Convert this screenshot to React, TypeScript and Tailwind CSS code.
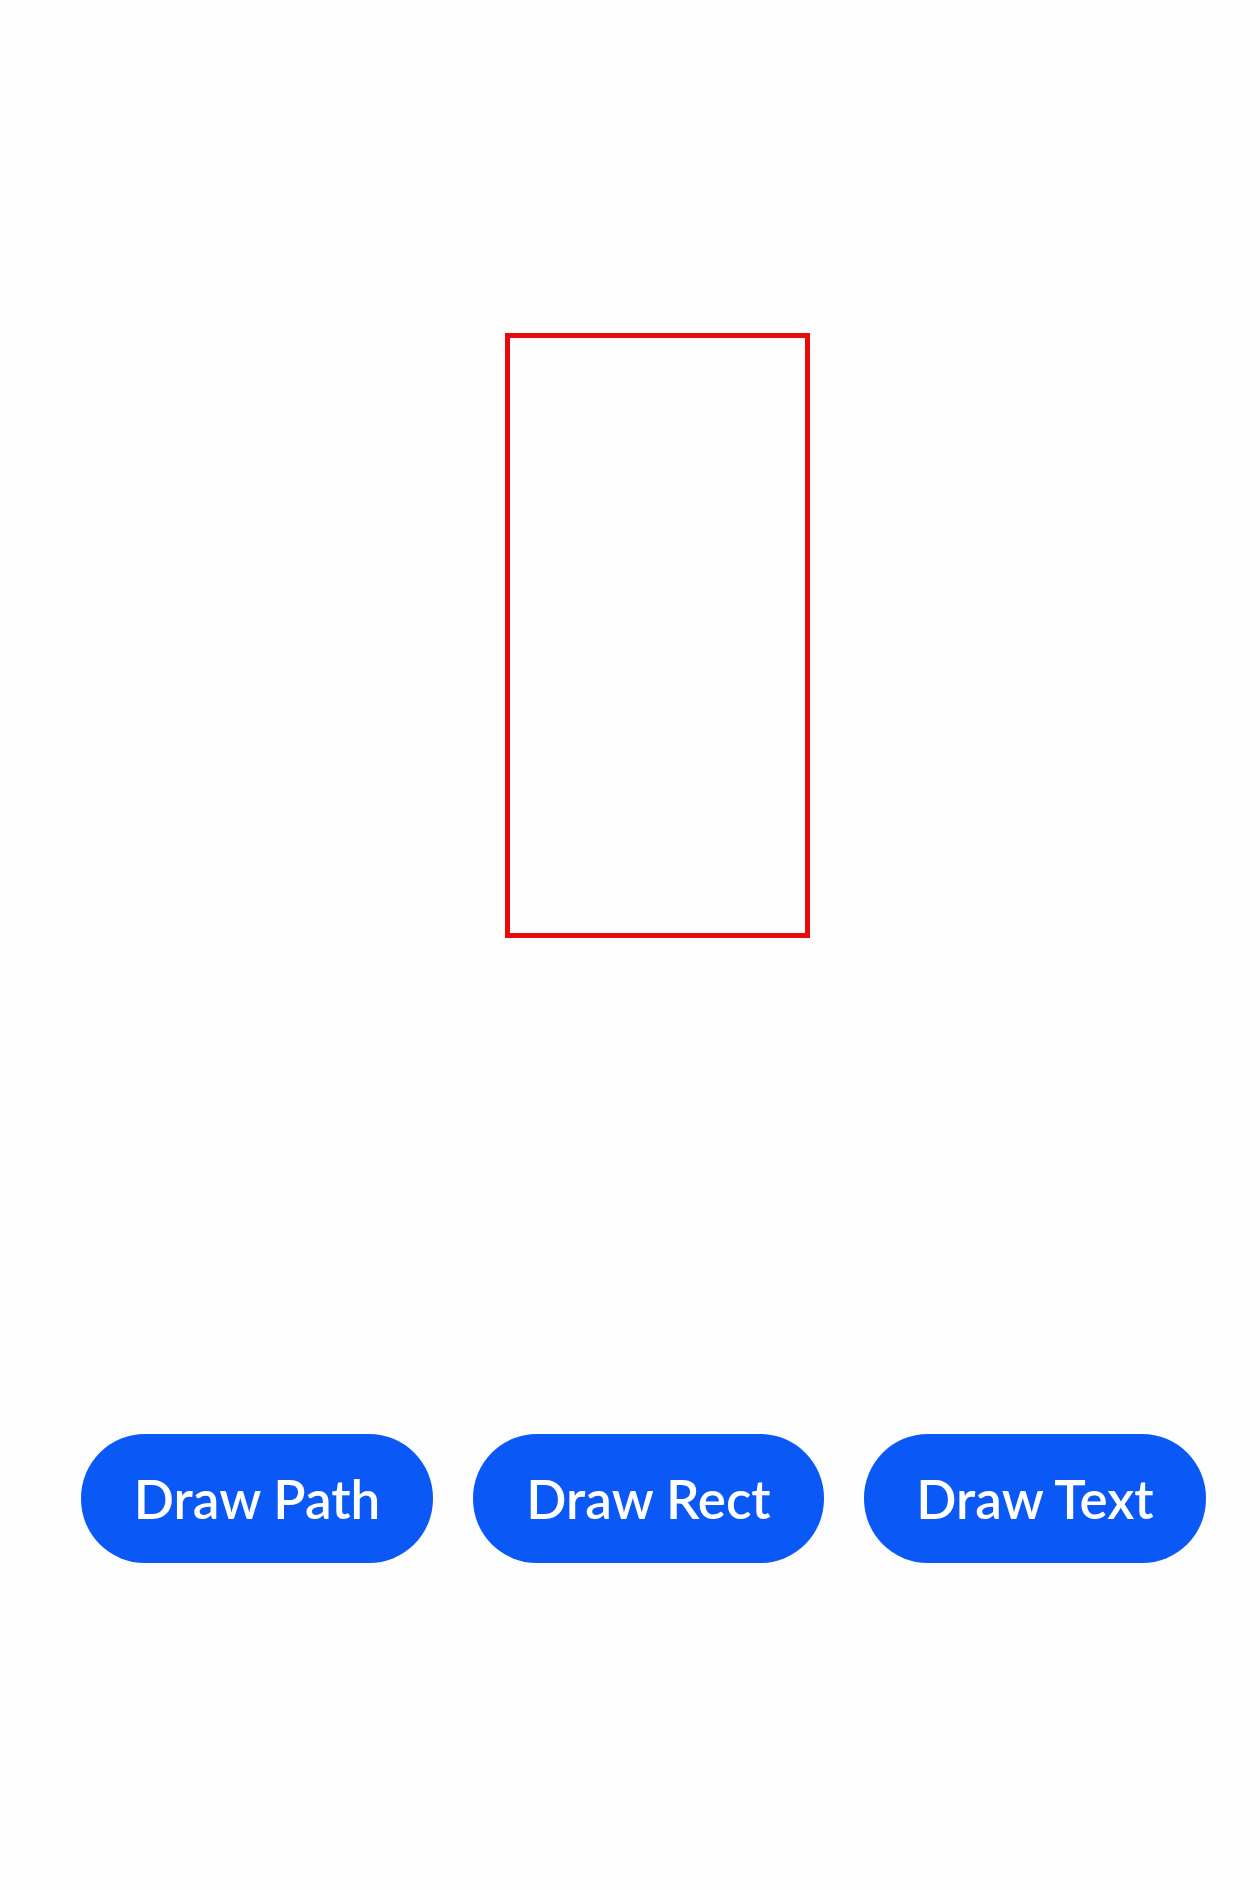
export default function App() {
  const buttons = [
    { l: "Draw Path", w: "w-[352px]" },
    { l: "Draw Rect", w: "w-[351px]" },
    { l: "Draw Text", w: "w-[342px]" },
  ];
  return (
    <div className="w-[1260px] h-[1890px] bg-[#fdfdfd] flex flex-col" style={{ fontFamily: 'Lato, "Noto Sans", sans-serif' }}>
      <div className="pt-[333px] pl-[505px]">
        <div className="w-[305px] h-[605px] border-[5px] border-[#e30b0b]" />
      </div>
      <div className="mt-[496px] pl-[81px] flex gap-[40px]">
        {buttons.map((b) => (
          <button
            key={b.l}
            className={`${b.w} h-[129px] shrink-0 rounded-[64px] bg-[#0a59f7] text-white text-[53px] font-semibold leading-none whitespace-nowrap flex items-center justify-center`}
          >
            {b.l}
          </button>
        ))}
      </div>
    </div>
  );
}
